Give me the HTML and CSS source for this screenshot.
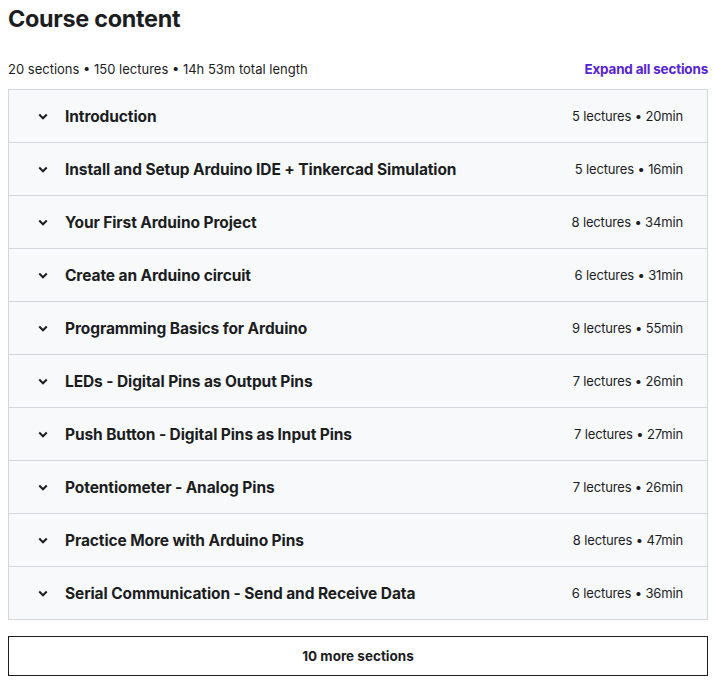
FILE: index.html
```html
<!DOCTYPE html>
<html lang="en">
<head>
    <meta charset="UTF-8">
    <meta name="viewport" content="width=device-width, initial-scale=1.0">
    <title>Course content</title>
    <link rel="stylesheet" href="styles.css">
</head>
<body>

    <div class="curriculum">
        <h2>Course content</h2>

        <div class="summary">
            <span>20 sections • 150 lectures • 14h 53m total length</span>
            <button class="expand-all">Expand all sections</button>
        </div>

        <div class="sections">
            <div class="section">
                <svg class="chevron" viewBox="0 0 24 24"><path d="M7 10l5 5 5-5"/></svg>
                <span class="title">Introduction</span>
                <span class="meta">5 lectures • 20min</span>
            </div>
            <div class="section">
                <svg class="chevron" viewBox="0 0 24 24"><path d="M7 10l5 5 5-5"/></svg>
                <span class="title">Install and Setup Arduino IDE + Tinkercad Simulation</span>
                <span class="meta">5 lectures • 16min</span>
            </div>
            <div class="section">
                <svg class="chevron" viewBox="0 0 24 24"><path d="M7 10l5 5 5-5"/></svg>
                <span class="title">Your First Arduino Project</span>
                <span class="meta">8 lectures • 34min</span>
            </div>
            <div class="section">
                <svg class="chevron" viewBox="0 0 24 24"><path d="M7 10l5 5 5-5"/></svg>
                <span class="title">Create an Arduino circuit</span>
                <span class="meta">6 lectures • 31min</span>
            </div>
            <div class="section">
                <svg class="chevron" viewBox="0 0 24 24"><path d="M7 10l5 5 5-5"/></svg>
                <span class="title">Programming Basics for Arduino</span>
                <span class="meta">9 lectures • 55min</span>
            </div>
            <div class="section">
                <svg class="chevron" viewBox="0 0 24 24"><path d="M7 10l5 5 5-5"/></svg>
                <span class="title">LEDs - Digital Pins as Output Pins</span>
                <span class="meta">7 lectures • 26min</span>
            </div>
            <div class="section">
                <svg class="chevron" viewBox="0 0 24 24"><path d="M7 10l5 5 5-5"/></svg>
                <span class="title">Push Button - Digital Pins as Input Pins</span>
                <span class="meta">7 lectures • 27min</span>
            </div>
            <div class="section">
                <svg class="chevron" viewBox="0 0 24 24"><path d="M7 10l5 5 5-5"/></svg>
                <span class="title">Potentiometer - Analog Pins</span>
                <span class="meta">7 lectures • 26min</span>
            </div>
            <div class="section">
                <svg class="chevron" viewBox="0 0 24 24"><path d="M7 10l5 5 5-5"/></svg>
                <span class="title">Practice More with Arduino Pins</span>
                <span class="meta">8 lectures • 47min</span>
            </div>
            <div class="section">
                <svg class="chevron" viewBox="0 0 24 24"><path d="M7 10l5 5 5-5"/></svg>
                <span class="title">Serial Communication - Send and Receive Data</span>
                <span class="meta">6 lectures • 36min</span>
            </div>
        </div>

        <button class="more">10 more sections</button>
    </div>

</body>
</html>
```

FILE: styles.css
```css
body {
    font-family: Inter, "Noto Sans", sans-serif;
    color: #2d2f31;
    margin: 0;
    padding: 0 6px 0 8px;
    background: #fff;
}
.curriculum {
    width: 700px;
}
h2 {
    font-size: 23.4px;
    font-weight: 700;
    color: #1c1d1f;
    margin: 4px 0 0;
    line-height: 30px;
    letter-spacing: -0.3px;
}
.summary {
    display: flex;
    justify-content: space-between;
    align-items: center;
    height: 30px;
    margin-top: 20px;
    font-size: 13px;
    letter-spacing: 0;
    color: #1c1d1f;
}
.expand-all {
    background: none;
    border: none;
    padding: 0;
    font-family: inherit;
    font-size: 13.5px;
    font-weight: 700;
    color: #5624d0;
    letter-spacing: -0.2px;
}
.sections {
    border: 1px solid #d1d7dc;
    margin-top: 5px;
}
.section {
    display: flex;
    align-items: center;
    height: 52px;
    padding: 0 24px 0 25px;
    background: #f7f9fa;
    border-bottom: 1px solid #d1d7dc;
}
.section:last-child {
    border-bottom: none;
    height: 52px;
}
.chevron {
    width: 18px;
    height: 18px;
    fill: none;
    stroke: #1c1d1f;
    stroke-width: 2.6;
    margin-right: 13px;
}
.title {
    flex: 1;
    font-size: 15.5px;
    font-weight: 700;
    color: #1c1d1f;
    letter-spacing: -0.1px;
}
.meta {
    font-size: 13px;
    letter-spacing: -0.15px;
    color: #1c1d1f;
}
.more {
    display: block;
    width: 700px;
    height: 40px;
    margin-top: 16px;
    background: #fff;
    border: 1px solid #1c1d1f;
    font-family: inherit;
    font-size: 13.5px;
    font-weight: 700;
    color: #1c1d1f;
}
```
